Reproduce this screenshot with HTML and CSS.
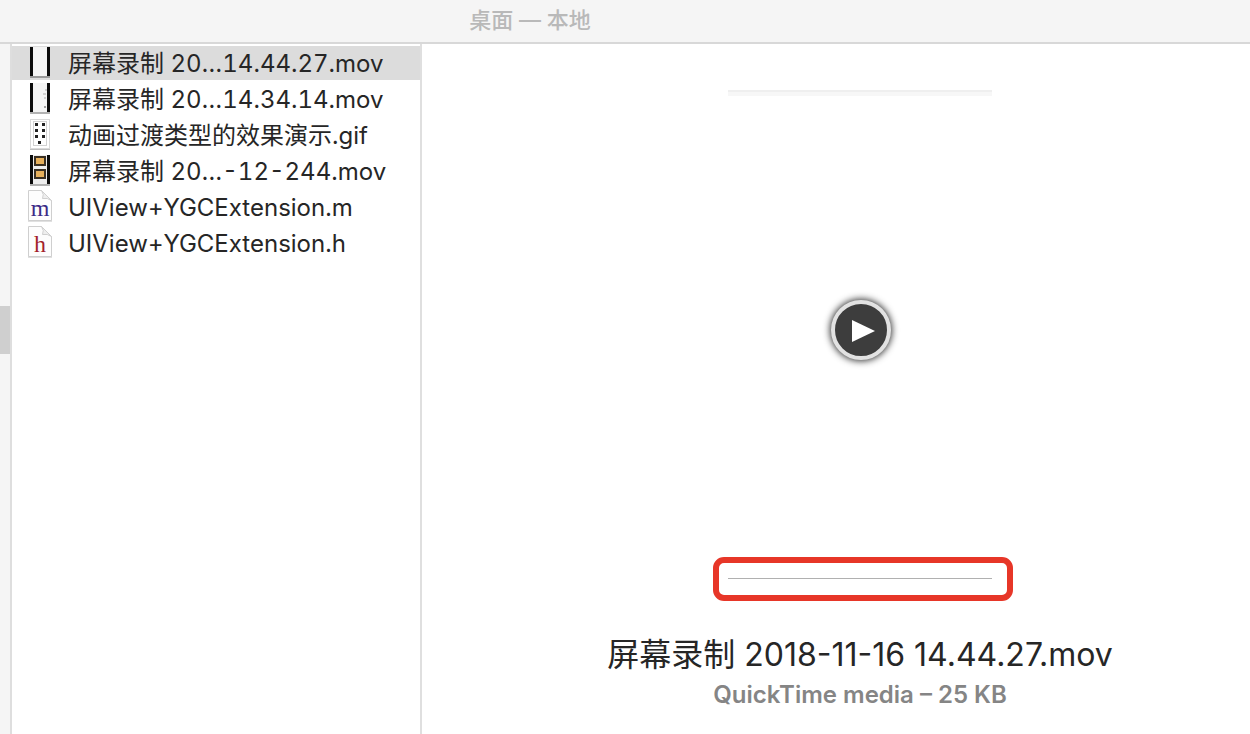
FILE: index.html
```html
<!DOCTYPE html>
<html lang="zh-CN">
<head>
<meta charset="utf-8">
<title>桌面 — 本地</title>
<link rel="stylesheet" href="styles.css">
</head>
<body>
<header class="titlebar"><h1 class="titlebar-text">桌面 — 本地</h1></header>
<main class="browser">
  <aside class="edge"><div class="edge-selection"></div></aside>
  <ul class="files">
    <li class="file file-selected">
      <svg class="icon" viewBox="0 0 26 34"><rect x="2" y="2" width="20" height="30" fill="#000" opacity=".3"/><rect x="2" y="1" width="20" height="29" fill="#0b0b0b"/><rect x="5" y="1" width="14" height="29" fill="#f4f4f4"/></svg>
      <span class="name">屏幕录制 20…14.44.27.mov</span>
    </li>
    <li class="file">
      <svg class="icon" viewBox="0 0 26 34"><rect x="2" y="2" width="20" height="30" fill="#000" opacity=".3"/><rect x="2" y="1" width="20" height="29" fill="#0b0b0b"/><rect x="5" y="1" width="14" height="29" fill="#f4f4f4"/><path d="M17 8h2M15 12h3M16 16h2" stroke="#aaa"/><path d="M16 25h2" stroke="#444"/></svg>
      <span class="name">屏幕录制 20…14.34.14.mov</span>
    </li>
    <li class="file">
      <svg class="icon" viewBox="0 0 26 34"><rect x="2" y="2" width="20" height="30" fill="#000" opacity=".25"/><rect x="2.500" y="1.500" width="19" height="29" fill="#fff" stroke="#dadada"/><rect x="5.500" y="3.500" width="13" height="24" fill="#fff" stroke="#d2d2d2"/><path d="M7 5h3v3h-3zM14 5h3v3h-3zM7 11h3v3h-3zM14 11h3v3h-3zM7 17h3v3h-3zM14 17h3v3h-3zM10 23h3v3h-3z" fill="#222"/></svg>
      <span class="name">动画过渡类型的效果演示.gif</span>
    </li>
    <li class="file">
      <svg class="icon" viewBox="0 0 26 34"><rect x="2" y="2" width="20" height="30" fill="#000" opacity=".3"/><rect x="2" y="1" width="20" height="29" fill="#0b0b0b"/><rect x="5" y="1" width="14" height="29" fill="#eee"/><path d="M7 3h10v8h-10zM7 16h10v8h-10z" fill="#e6b05c" stroke="#3a3023" stroke-width="2"/></svg>
      <span class="name">屏幕录制 20…-12-244.mov</span>
    </li>
    <li class="file">
      <svg class="icon" viewBox="0 0 26 34"><path d="M0 2h13l11 10v20H0z" fill="#000" opacity=".12"/><path d="M.500 .500h13l10 10v20h-23z" fill="#fdfdfd" stroke="#cfcfcf"/><path d="M13.500 .500q3 4 1 8q5-1 9 2z" fill="#eee" stroke="#cfcfcf"/><text class="glyph glyph-m" x="12" y="26">m</text></svg>
      <span class="name">UIView+YGCExtension.m</span>
    </li>
    <li class="file">
      <svg class="icon" viewBox="0 0 26 34"><path d="M0 2h13l11 10v20H0z" fill="#000" opacity=".12"/><path d="M.500 .500h13l10 10v20h-23z" fill="#fdfdfd" stroke="#cfcfcf"/><path d="M13.500 .500q3 4 1 8q5-1 9 2z" fill="#eee" stroke="#cfcfcf"/><text class="glyph glyph-h" x="12" y="26">h</text></svg>
      <span class="name">UIView+YGCExtension.h</span>
    </li>
  </ul>
  <section class="preview">
    <div class="video">
      <div class="video-top"></div>
      <button class="play" aria-label="播放"><svg class="play-icon" viewBox="0 0 52 52"><path d="M17 16v22l23-11z" fill="#fff"/></svg></button>
    </div>
    <div class="callout"><div class="callout-line"></div></div>
    <h2 class="title">屏幕录制 2018-11-16 14.44.27.mov</h2>
    <p class="meta">QuickTime media – 25 KB</p>
  </section>
</main>
</body>
</html>
```
FILE: styles.css
```css
* { box-sizing: border-box; }
body {
  margin: 0;
  min-height: 100vh;
  display: flex;
  flex-direction: column;
  background: #fff;
  color: #262626;
  font-family: Inter, "Noto Sans CJK SC", sans-serif;
}
.titlebar {
  height: 44px;
  padding-right: 190px;
  background: #f5f5f5;
  border-bottom: 2px solid #d8d8d8;
  text-align: center;
}
.titlebar-text {
  margin: 0;
  font-size: 22px;
  line-height: 40px;
  font-weight: 500;
  color: #b9b9b9;
}
.browser { flex: 1; display: flex; }
.edge {
  width: 12px;
  padding-top: 262px;
  background: #f5f5f5;
  border-right: 2px solid #dedede;
}
.edge-selection { height: 48px; background: #cfcfcf; }
.files {
  width: 410px;
  margin: 0;
  padding: 2px 0 0;
  list-style: none;
  border-right: 2px solid #dfdfdf;
}
.file {
  display: flex;
  align-items: center;
  gap: 14px;
  height: 34px;
  margin-bottom: 2px;
  padding-left: 16px;
  white-space: nowrap;
}
.file-selected { background: #dcdcdc; }
.icon { width: 26px; height: 34px; flex: none; }
.name {
  padding-top: 2px;
  font-size: 24px;
  line-height: 34px;
  font-weight: 400;
  font-variant-numeric: tabular-nums;
}
.glyph { font-family: "Liberation Serif", serif; font-size: 24px; text-anchor: middle; }
.glyph-m { fill: #3b2a86; }
.glyph-h { fill: #a31f2b; }
.preview {
  flex: 1;
  display: flex;
  flex-direction: column;
  align-items: center;
  padding: 46px 0 0 48px;
}
.video {
  width: 264px;
  height: 467px;
  display: flex;
  flex-direction: column;
  align-items: center;
  gap: 204px;
}
.video-top { width: 100%; height: 6px; background: #f7f7f7; border-top: 2px solid #efefef; }
.play {
  width: 60px;
  height: 60px;
  margin-left: 2px;
  padding: 0;
  border: 4px solid #e2e2e2;
  border-radius: 50%;
  background: #3d3d3d;
  box-shadow: 0 0 7px 1px #333;
}
.play-icon { display: block; width: 52px; height: 52px; }
.callout {
  width: 300px;
  height: 44px;
  margin-left: 6px;
  padding: 15px 0 0 9px;
  border: 6px solid #e73628;
  border-radius: 11px;
}
.callout-line { width: 264px; height: 1px; background: #b0b0b0; }
.title { margin: 33px 0 0; font-size: 32px; line-height: 42px; font-weight: 400; }
.meta { margin: 3px 0 0; font-size: 24px; line-height: 32px; font-weight: 600; color: #858585; }
```
